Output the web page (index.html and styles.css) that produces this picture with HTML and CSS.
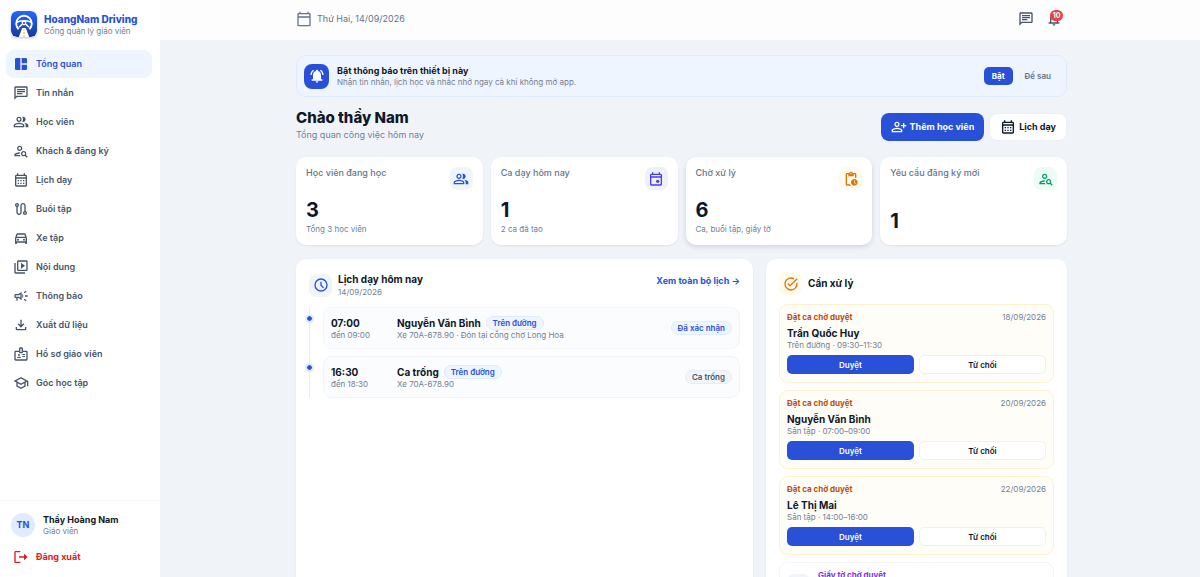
FILE: index.html
```html
<!DOCTYPE html>
<html lang="vi">
<head>
    <meta charset="UTF-8">
    <meta name="viewport" content="width=device-width, initial-scale=1.0">
    <title>HoangNam Driving</title>
    <link rel="stylesheet" href="styles.css">
</head>
<body>

    <!-- Icon set -->
    <svg class="hidden" aria-hidden="true">
        <symbol id="i-dashboard" viewBox="0 0 24 24"><path d="M11 21H5c-1.1 0-2-.9-2-2V5c0-1.1.9-2 2-2h6v18zm2 0h6c1.1 0 2-.9 2-2v-6h-8v8zm8-10V5c0-1.1-.9-2-2-2h-6v8h8z"/></symbol>
        <symbol id="i-chat" viewBox="0 0 24 24"><path d="M4 4h16v12H5.17L4 17.17V4m0-2c-1.1 0-2 .9-2 2v18l4-4h14c1.1 0 2-.9 2-2V4c0-1.1-.9-2-2-2H4zm2 10h8v2H6v-2zm0-3h12v2H6V9zm0-3h12v2H6V6z"/></symbol>
        <symbol id="i-group" viewBox="0 0 24 24"><path d="M16.67 13.13C18.04 14.06 19 15.32 19 17v3h4v-3c0-2.18-3.57-3.47-6.33-3.87zM15 12c2.21 0 4-1.79 4-4s-1.79-4-4-4c-.47 0-.91.1-1.33.24C14.5 5.27 15 6.58 15 8s-.5 2.73-1.33 3.76c.42.14.86.24 1.33.24zM9 12c2.21 0 4-1.79 4-4s-1.79-4-4-4-4 1.79-4 4 1.79 4 4 4zm0-6c1.1 0 2 .9 2 2s-.9 2-2 2-2-.9-2-2 .9-2 2-2zM9 13c-2.67 0-8 1.34-8 4v3h16v-3c0-2.66-5.33-4-8-4zm6 5H3v-.99C3.2 16.29 6.3 15 9 15s5.8 1.29 6 2v1z"/></symbol>
        <symbol id="i-person-search" viewBox="0 0 24 24"><path d="M10 12c2.21 0 4-1.79 4-4s-1.79-4-4-4-4 1.79-4 4 1.79 4 4 4zm0-6c1.1 0 2 .9 2 2s-.9 2-2 2-2-.9-2-2 .9-2 2-2zM4 18c.22-.72 3.31-2 6-2 0-.7.13-1.37.35-1.99C7.62 13.91 2 15.27 2 18v2h9.54c-.52-.58-.93-1.25-1.19-2H4zM19.43 18.02c.36-.59.57-1.28.57-2.02 0-2.21-1.79-4-4-4s-4 1.79-4 4 1.79 4 4 4c.74 0 1.43-.22 2.02-.57L20.59 22 22 20.59l-2.57-2.57zM16 18c-1.1 0-2-.9-2-2s.9-2 2-2 2 .9 2 2-.9 2-2 2z"/></symbol>
        <symbol id="i-calendar" viewBox="0 0 24 24"><path d="M19 4h-1V2h-2v2H8V2H6v2H5c-1.1 0-2 .9-2 2v14c0 1.1.9 2 2 2h14c1.1 0 2-.9 2-2V6c0-1.1-.9-2-2-2zm0 16H5V10h14v10zm0-12H5V6h14v2zM9 14H7v-2h2v2zm4 0h-2v-2h2v2zm4 0h-2v-2h2v2zm-8 4H7v-2h2v2zm4 0h-2v-2h2v2zm4 0h-2v-2h2v2z"/></symbol>
        <symbol id="i-route" viewBox="0 0 24 24"><path d="M19 15.18V7c0-2.21-1.79-4-4-4s-4 1.79-4 4v10c0 1.1-.9 2-2 2s-2-.9-2-2V8.82C8.16 8.4 9 7.3 9 6c0-1.66-1.34-3-3-3S3 4.34 3 6c0 1.3.84 2.4 2 2.82V17c0 2.21 1.79 4 4 4s4-1.79 4-4V7c0-1.1.9-2 2-2s2 .9 2 2v8.18c-1.16.41-2 1.51-2 2.82 0 1.66 1.34 3 3 3s3-1.34 3-3c0-1.3-.84-2.4-2-2.82zM6 7c-.55 0-1-.45-1-1s.45-1 1-1 1 .45 1 1-.45 1-1 1zm12 12c-.55 0-1-.45-1-1s.45-1 1-1 1 .45 1 1-.45 1-1 1z"/></symbol>
        <symbol id="i-car" viewBox="0 0 24 24"><path d="M18.92 6.01C18.72 5.42 18.16 5 17.5 5h-11c-.66 0-1.21.42-1.42 1.01L3 12v8c0 .55.45 1 1 1h1c.55 0 1-.45 1-1v-1h12v1c0 .55.45 1 1 1h1c.55 0 1-.45 1-1v-8l-2.08-5.99zM6.85 7h10.29l1.08 3.11H5.77L6.85 7zM19 17H5v-5h14v5z"/><circle cx="7.5" cy="14.5" r="1.5"/><circle cx="16.5" cy="14.5" r="1.5"/></symbol>
        <symbol id="i-video" viewBox="0 0 24 24"><path d="M4 6H2v14c0 1.1.9 2 2 2h14v-2H4V6zm16-4H8c-1.1 0-2 .9-2 2v12c0 1.1.9 2 2 2h12c1.1 0 2-.9 2-2V4c0-1.1-.9-2-2-2zm0 14H8V4h12v12zM12 5.5v9l6-4.5z"/></symbol>
        <symbol id="i-campaign" viewBox="0 0 24 24"><path d="M18 11v2h4v-2h-4zm-2 6.61c.96.71 2.21 1.65 3.2 2.39.4-.53.8-1.07 1.2-1.6-.99-.74-2.24-1.68-3.2-2.4-.4.54-.8 1.08-1.2 1.61zM20.4 5.6c-.4-.53-.8-1.07-1.2-1.6-.99.74-2.24 1.68-3.2 2.4.4.53.8 1.07 1.2 1.6.96-.72 2.21-1.65 3.2-2.4zM4 9c-1.1 0-2 .9-2 2v2c0 1.1.9 2 2 2h1v4h2v-4h1l5 3V6L8 9H4zm5.03 1.71L11 9.53v4.94l-1.97-1.18-.48-.29H4v-2h4.55l.48-.29zM15.5 12c0-1.33-.58-2.53-1.5-3.35v6.69c.92-.81 1.5-2.01 1.5-3.34z"/></symbol>
        <symbol id="i-download" viewBox="0 0 24 24"><path d="M12 16l-5-5 1.4-1.45 2.6 2.6V4h2v8.15l2.6-2.6L17 11l-5 5zm-6 4c-1.1 0-2-.9-2-2v-3h2v3h12v-3h2v3c0 1.1-.9 2-2 2H6z"/></symbol>
        <symbol id="i-badge" viewBox="0 0 24 24"><path d="M20 7h-5V4c0-1.1-.9-2-2-2h-2c-1.1 0-2 .9-2 2v3H4c-1.1 0-2 .9-2 2v11c0 1.1.9 2 2 2h16c1.1 0 2-.9 2-2V9c0-1.1-.9-2-2-2zm-9-3h2v5h-2V4zm9 16H4V9h5c0 1.1.9 2 2 2h2c1.1 0 2-.9 2-2h5v11zM14 12h4v1.5h-4zM14 15h4v1.5h-4zM6 18v-.4c0-.9 1.5-1.6 3-1.6s3 .7 3 1.6v.4z"/><circle cx="9" cy="13.5" r="1.5"/></symbol>
        <symbol id="i-school" viewBox="0 0 24 24"><path d="M12 3 1 9l4 2.18v6L12 21l7-3.82v-6l2-1.09V17h2V9L12 3zm6.82 6L12 12.72 5.18 9 12 5.28 18.82 9zM17 15.99l-5 2.73-5-2.73v-3.72L12 15l5-2.73v3.72z"/></symbol>
        <symbol id="i-logout" viewBox="0 0 24 24"><path d="M11 3H4c-1.1 0-2 .9-2 2v14c0 1.1.9 2 2 2h7v-2H4V5h7V3zM16.5 7v4H9v2h7.5v4l5.5-5-5.5-5z"/></symbol>
        <symbol id="i-today" viewBox="0 0 24 24"><path d="M20 3h-1V1h-2v2H7V1H5v2H4c-1.1 0-2 .9-2 2v16c0 1.1.9 2 2 2h16c1.1 0 2-.9 2-2V5c0-1.1-.9-2-2-2zm0 18H4V10h16v11zm0-13H4V5h16v3z"/></symbol>
        <symbol id="i-bell" viewBox="0 0 24 24"><path d="M12 22c1.1 0 2-.9 2-2h-4c0 1.1.9 2 2 2zm6-5v-6c0-3.07-1.63-5.64-4.5-6.32V4c0-.83-.67-1.5-1.5-1.5s-1.5.67-1.5 1.5v.68C7.64 5.36 6 7.92 6 11v6H4v2h16v-2h-2zm-2 0H8v-6c0-2.48 1.51-4.5 4-4.5s4 2.02 4 4.5v6z"/></symbol>
        <symbol id="i-bell-active" viewBox="0 0 24 24"><path d="M12 22c1.1 0 2-.9 2-2h-4c0 1.1.9 2 2 2zm6-5v-6c0-3.07-1.63-5.64-4.5-6.32V4c0-.83-.67-1.5-1.5-1.5s-1.5.67-1.5 1.5v.68C7.64 5.36 6 7.92 6 11v6H4v2h16v-2h-2zM7.58 4.08 6.15 2.65C3.75 4.48 2.17 7.3 2.03 10.5h2c.15-2.65 1.51-4.97 3.55-6.42zM19.97 10.5h2c-.15-3.2-1.73-6.02-4.12-7.85l-1.42 1.43c2.02 1.45 3.39 3.77 3.54 6.42z"/></symbol>
        <symbol id="i-person-add" viewBox="0 0 24 24"><path d="M9 12c2.21 0 4-1.79 4-4s-1.79-4-4-4-4 1.79-4 4 1.79 4 4 4zm0-6c1.1 0 2 .9 2 2s-.9 2-2 2-2-.9-2-2 .9-2 2-2zM9 13c-2.67 0-8 1.34-8 4v3h16v-3c0-2.66-5.33-4-8-4zm6 5H3v-.99C3.2 16.29 6.3 15 9 15s5.8 1.29 6 2v1zM18 14v-3h-3V9h3V6h2v3h3v2h-3v3z"/></symbol>
        <symbol id="i-event" viewBox="0 0 24 24"><path d="M19 4h-1V2h-2v2H8V2H6v2H5c-1.1 0-2 .9-2 2v14c0 1.1.9 2 2 2h14c1.1 0 2-.9 2-2V6c0-1.1-.9-2-2-2zm0 16H5V10h14v10zm0-12H5V6h14v2z"/><circle cx="14.5" cy="15.5" r="2.5"/></symbol>
        <symbol id="i-pending" viewBox="0 0 24 24"><path d="M17 12c-2.76 0-5 2.24-5 5s2.24 5 5 5 5-2.24 5-5-2.24-5-5-5zm1.65 7.35L16.5 17.2V14h1v2.79l1.85 1.85-.7.71zM18 3h-3.18C14.4 1.84 13.3 1 12 1s-2.4.84-2.82 2H6c-1.1 0-2 .9-2 2v15c0 1.1.9 2 2 2h6.11c-.59-.57-1.07-1.25-1.42-2H6V5h2v3h8V5h2v5.08c.71.1 1.38.31 2 .6V5c0-1.1-.9-2-2-2zm-6 2c-.55 0-1-.45-1-1s.45-1 1-1 1 .45 1 1-.45 1-1 1z"/></symbol>
        <symbol id="i-clock" viewBox="0 0 24 24"><path fill="none" stroke="currentColor" stroke-width="2" d="M12 3a9 9 0 1 0 0 18 9 9 0 0 0 0-18zM12 7v5.5l3.8 3.8"/></symbol>
        <symbol id="i-task" viewBox="0 0 24 24"><path fill="none" stroke="currentColor" stroke-width="2" d="M20.8 10.2A9 9 0 1 1 16.5 4.2M7.1 11.3l3.5 3.5L21.3 4.1"/></symbol>
        <symbol id="i-file" viewBox="0 0 24 24"><path d="M14 2H6c-1.1 0-2 .9-2 2v16c0 1.1.9 2 2 2h12c1.1 0 2-.9 2-2V8l-6-6zM6 20V4h7v5h5v11H6z"/></symbol>
    </svg>

    <!-- Sidebar -->
    <aside class="sidebar">
        <div class="brand">
            <svg class="brand-logo" viewBox="0 0 26 26" aria-hidden="true">
                <defs>
                    <linearGradient id="logo-bg" x1="0" y1="0" x2="0" y2="1">
                        <stop offset="0" stop-color="#2468fb"/>
                        <stop offset="1" stop-color="#173a96"/>
                    </linearGradient>
                </defs>
                <rect width="26" height="26" rx="6" fill="url(#logo-bg)"/>
                <path d="M7.6 18.2a7.8 7.8 0 1 1 10.8 0" fill="none" stroke="#fff" stroke-width="1.9"/>
                <path d="M5.8 11.2c4-1.6 10.4-1.6 14.4 0M8 16.2l3-2.8M18 16.2l-3-2.8" fill="none" stroke="#fff" stroke-width="1.5"/>
                <circle cx="13" cy="12" r="2.4" fill="#fff"/>
                <circle cx="13" cy="12" r="1.1" fill="#2257d8"/>
                <path d="M11.2 17h3.6l3.4 9H7.8z" fill="#fff"/>
                <path d="M13 18v1.6M13 21v1.8M13 24.2V26" stroke="#f59e0b" stroke-width="0.9"/>
            </svg>
            <div>
                <div class="brand-name">HoangNam Driving</div>
                <div class="brand-sub">Cổng quản lý giáo viên</div>
            </div>
        </div>

        <nav class="nav">
            <a class="nav-item active" href="#"><svg class="icon"><use href="#i-dashboard"/></svg>Tổng quan</a>
            <a class="nav-item" href="#"><svg class="icon"><use href="#i-chat"/></svg>Tin nhắn</a>
            <a class="nav-item" href="#"><svg class="icon"><use href="#i-group"/></svg>Học viên</a>
            <a class="nav-item" href="#"><svg class="icon"><use href="#i-person-search"/></svg>Khách &amp; đăng ký</a>
            <a class="nav-item" href="#"><svg class="icon"><use href="#i-calendar"/></svg>Lịch dạy</a>
            <a class="nav-item" href="#"><svg class="icon"><use href="#i-route"/></svg>Buổi tập</a>
            <a class="nav-item" href="#"><svg class="icon"><use href="#i-car"/></svg>Xe tập</a>
            <a class="nav-item" href="#"><svg class="icon"><use href="#i-video"/></svg>Nội dung</a>
            <a class="nav-item" href="#"><svg class="icon"><use href="#i-campaign"/></svg>Thông báo</a>
            <a class="nav-item" href="#"><svg class="icon"><use href="#i-download"/></svg>Xuất dữ liệu</a>
            <a class="nav-item" href="#"><svg class="icon"><use href="#i-badge"/></svg>Hồ sơ giáo viên</a>
            <a class="nav-item" href="#"><svg class="icon"><use href="#i-school"/></svg>Góc học tập</a>
        </nav>

        <div class="sidebar-footer">
            <div class="user">
                <div class="avatar">TN</div>
                <div>
                    <div class="user-name">Thầy Hoàng Nam</div>
                    <div class="user-role">Giáo viên</div>
                </div>
            </div>
            <button class="logout-btn"><svg class="icon"><use href="#i-logout"/></svg>Đăng xuất</button>
        </div>
    </aside>

    <div class="main">
        <!-- Top bar -->
        <header class="topbar">
            <div class="container topbar-inner">
                <div class="today"><svg class="icon"><use href="#i-today"/></svg>Thứ Hai, 14/09/2026</div>
                <div class="topbar-actions">
                    <button class="icon-btn" aria-label="Tin nhắn"><svg class="icon"><use href="#i-chat"/></svg></button>
                    <button class="icon-btn" aria-label="Thông báo"><svg class="icon"><use href="#i-bell"/></svg><span class="badge">10</span></button>
                </div>
            </div>
        </header>

        <main class="container content">
            <section class="banner">
                <div class="banner-icon"><svg class="icon"><use href="#i-bell-active"/></svg></div>
                <div class="banner-text">
                    <div class="banner-title">Bật thông báo trên thiết bị này</div>
                    <div class="small">Nhận tin nhắn, lịch học và nhắc nhở ngay cả khi không mở app.</div>
                </div>
                <button class="enable-btn">Bật</button>
                <button class="later-btn">Để sau</button>
            </section>

            <section class="page-head">
                <div>
                    <h1>Chào thầy Nam</h1>
                    <p class="page-sub">Tổng quan công việc hôm nay</p>
                </div>
                <div class="page-actions">
                    <button class="btn btn-primary"><svg class="icon"><use href="#i-person-add"/></svg>Thêm học viên</button>
                    <button class="btn"><svg class="icon"><use href="#i-calendar"/></svg>Lịch dạy</button>
                </div>
            </section>

            <!-- Stats -->
            <section class="stats">
                <a class="stat" href="#">
                    <div class="stat-top">Học viên đang học<span class="tile tile-blue"><svg class="icon"><use href="#i-group"/></svg></span></div>
                    <div><div class="stat-value">3</div><div class="small">Tổng 3 học viên</div></div>
                </a>
                <a class="stat" href="#">
                    <div class="stat-top">Ca dạy hôm nay<span class="tile tile-indigo"><svg class="icon"><use href="#i-event"/></svg></span></div>
                    <div><div class="stat-value">1</div><div class="small">2 ca đã tạo</div></div>
                </a>
                <a class="stat raised" href="#">
                    <div class="stat-top">Chờ xử lý<span class="tile tile-amber"><svg class="icon"><use href="#i-pending"/></svg></span></div>
                    <div><div class="stat-value">6</div><div class="small">Ca, buổi tập, giấy tờ</div></div>
                </a>
                <a class="stat" href="#">
                    <div class="stat-top">Yêu cầu đăng ký mới<span class="tile tile-green"><svg class="icon"><use href="#i-person-search"/></svg></span></div>
                    <div class="stat-value">1</div>
                </a>
            </section>

            <section class="panels">
                <!-- Schedule -->
                <div class="panel">
                    <div class="panel-head">
                        <span class="tile tile-blue"><svg class="icon"><use href="#i-clock"/></svg></span>
                        <div>
                            <h2>Lịch dạy hôm nay</h2>
                            <div class="small">14/09/2026</div>
                        </div>
                        <a class="all-link" href="#">Xem toàn bộ lịch →</a>
                    </div>
                    <div class="timeline">
                        <div class="slot">
                            <div class="slot-time"><div class="name">07:00</div><div class="small">đến 09:00</div></div>
                            <div class="slot-info">
                                <div class="slot-name"><span class="name">Nguyễn Văn Bình</span><span class="pill">Trên đường</span></div>
                                <div class="small">Xe 70A-678.90 · Đón tại cổng chợ Long Hoa</div>
                            </div>
                            <span class="pill">Đã xác nhận</span>
                        </div>
                        <div class="slot">
                            <div class="slot-time"><div class="name">16:30</div><div class="small">đến 18:30</div></div>
                            <div class="slot-info">
                                <div class="slot-name"><span class="name">Ca trống</span><span class="pill">Trên đường</span></div>
                                <div class="small">Xe 70A-678.90</div>
                            </div>
                            <span class="pill pill-gray">Ca trống</span>
                        </div>
                    </div>
                </div>

                <!-- Pending requests -->
                <div class="panel">
                    <div class="panel-head">
                        <span class="tile tile-amber"><svg class="icon"><use href="#i-task"/></svg></span>
                        <h2>Cần xử lý</h2>
                    </div>
                    <div class="requests">
                        <article class="request">
                            <div class="request-top"><span class="request-type">Đặt ca chờ duyệt</span><span class="small">18/09/2026</span></div>
                            <div class="name">Trần Quốc Huy</div>
                            <div class="small">Trên đường · 09:30–11:30</div>
                            <div class="request-actions"><button class="approve-btn">Duyệt</button><button class="reject-btn">Từ chối</button></div>
                        </article>
                        <article class="request">
                            <div class="request-top"><span class="request-type">Đặt ca chờ duyệt</span><span class="small">20/09/2026</span></div>
                            <div class="name">Nguyễn Văn Bình</div>
                            <div class="small">Sân tập · 07:00–09:00</div>
                            <div class="request-actions"><button class="approve-btn">Duyệt</button><button class="reject-btn">Từ chối</button></div>
                        </article>
                        <article class="request">
                            <div class="request-top"><span class="request-type">Đặt ca chờ duyệt</span><span class="small">22/09/2026</span></div>
                            <div class="name">Lê Thị Mai</div>
                            <div class="small">Sân tập · 14:00–16:00</div>
                            <div class="request-actions"><button class="approve-btn">Duyệt</button><button class="reject-btn">Từ chối</button></div>
                        </article>
                        <article class="request request-doc">
                            <span class="tile tile-blue doc-tile"><svg class="icon"><use href="#i-file"/></svg></span>
                            <div class="request-type">Giấy tờ chờ duyệt</div>
                        </article>
                    </div>
                </div>
            </section>
        </main>
    </div>

</body>
</html>
```
FILE: styles.css
```css
* {
    box-sizing: border-box;
}
body {
    margin: 0;
    display: flex;
    height: 100vh;
    overflow: hidden;
    font-family: Inter, "Noto Sans", sans-serif;
    font-size: 9px;
    line-height: 12px;
    color: #0f172a;
    background-color: #f0f4f9;
}
h1, h2, p {
    margin: 0;
}
a {
    color: inherit;
    text-decoration: none;
}
button {
    font: inherit;
    color: inherit;
    border: none;
    background: none;
    padding: 0;
    cursor: pointer;
}
.hidden {
    display: none;
}
.icon {
    width: 16px;
    height: 16px;
    flex-shrink: 0;
    fill: currentColor;
}
.small {
    font-size: 8px;
    line-height: 11px;
    color: #718096;
    font-weight: 400;
}
.name {
    font-size: 10px;
    line-height: 14px;
    font-weight: 700;
}

/* Sidebar */
.sidebar {
    width: 160px;
    flex-shrink: 0;
    display: flex;
    flex-direction: column;
    background-color: #fff;
}
.brand {
    display: flex;
    align-items: center;
    gap: 7px;
    padding: 11px 11px 13px;
}
.brand-logo {
    width: 26px;
    height: 26px;
    border-radius: 6px;
    box-shadow: 0 1px 3px rgba(30, 64, 175, 0.3);
}
.brand-name {
    padding-top: 1px;
    font-size: 10px;
    line-height: 14px;
    font-weight: 800;
    color: #2851d8;
    white-space: nowrap;
}
.brand-sub, .user-role {
    font-size: 8px;
    line-height: 11px;
    color: #718096;
}
.nav {
    flex: 1;
    display: flex;
    flex-direction: column;
    gap: 1px;
    padding: 0 8px 0 6px;
}
.nav-item {
    display: flex;
    align-items: center;
    gap: 7px;
    height: 28px;
    padding: 0 7px;
    border-radius: 8px;
    font-weight: 600;
    color: #475569;
}
.nav-item.active {
    background-color: #eff5ff;
    color: #2851d8;
}
.sidebar-footer {
    border-top: 1px solid #f1f5f9;
    padding: 12px 11px;
}
.user {
    display: flex;
    align-items: center;
    gap: 8px;
}
.avatar {
    width: 24px;
    height: 24px;
    border-radius: 50%;
    background-color: #dfebfe;
    color: #2851d8;
    font-weight: 700;
    line-height: 24px;
    text-align: center;
}
.user-name {
    font-weight: 700;
}
.logout-btn {
    display: flex;
    align-items: center;
    gap: 7px;
    margin-top: 12px;
    padding-left: 2px;
    font-weight: 700;
    color: #dc1c24;
}

/* Top bar */
.main {
    flex: 1;
    min-width: 0;
}
.container {
    max-width: 774px;
    margin: 0 auto;
    padding-left: 3px;
}
.topbar {
    background-color: #fdfdfe;
}
.topbar-inner {
    display: flex;
    align-items: center;
    justify-content: space-between;
    height: 40px;
    padding-bottom: 2px;
}
.today {
    display: flex;
    align-items: center;
    gap: 5px;
    color: #64748b;
}
.topbar-actions {
    display: flex;
    gap: 12px;
    padding-right: 5px;
    color: #475569;
}
.icon-btn {
    position: relative;
    display: flex;
}
.badge {
    position: absolute;
    top: -1px;
    right: -1px;
    min-width: 13px;
    padding: 0 2px;
    border-radius: 6px;
    background-color: #ec4141;
    color: #fff;
    font-size: 7px;
    line-height: 11px;
    font-weight: 700;
}

/* Notification banner */
.content {
    padding-top: 15px;
}
.banner {
    display: flex;
    align-items: center;
    height: 42px;
    padding: 0 7px;
    border: 1px solid #dfebfe;
    border-radius: 10px;
    background-color: #eff5ff;
}
.banner-icon {
    display: grid;
    place-items: center;
    width: 25px;
    height: 25px;
    margin-right: 8px;
    border-radius: 8px;
    background-color: #2851d8;
    color: #fff;
}
.banner-text {
    flex: 1;
}
.banner-title {
    font-weight: 700;
}
.enable-btn, .later-btn {
    height: 18px;
    padding: 0 8px;
    border-radius: 5px;
    font-size: 8px;
    font-weight: 700;
}
.enable-btn {
    background-color: #2851d8;
    color: #fff;
    margin-right: 4px;
}
.later-btn {
    color: #64748b;
    font-weight: 600;
}

/* Page heading */
.page-head {
    display: flex;
    align-items: center;
    justify-content: space-between;
    padding: 11px 0 16px;
}
h1 {
    font-size: 15px;
    line-height: 20px;
    font-weight: 800;
}
.page-sub {
    line-height: 13px;
    color: #718096;
}
.page-actions {
    display: flex;
    gap: 5px;
    padding-top: 5px;
}
.btn {
    display: flex;
    align-items: center;
    gap: 3px;
    height: 28px;
    padding: 0 10px;
    border: 1px solid #edf1f7;
    border-radius: 8px;
    background-color: #fff;
    font-weight: 700;
}
.btn-primary {
    border: none;
    background-color: #2851d8;
    color: #fff;
}

/* Stat cards */
.stats {
    display: grid;
    grid-template-columns: repeat(4, 1fr);
    gap: 8px;
}
.stat {
    display: flex;
    flex-direction: column;
    justify-content: space-between;
    height: 88px;
    padding: 10px;
    border-radius: 10px;
    background-color: #fff;
    box-shadow: 0 1px 2px rgba(15, 23, 42, 0.08);
}
.stat.raised {
    box-shadow: 0 2px 5px rgba(15, 23, 42, 0.14);
}
.stat-top {
    display: flex;
    justify-content: space-between;
    font-weight: 500;
    color: #64748b;
}
.stat-value {
    font-size: 20px;
    line-height: 28px;
    font-weight: 700;
}
.tile {
    display: grid;
    place-items: center;
    width: 23px;
    height: 23px;
    flex-shrink: 0;
    border-radius: 7px;
}
.tile-blue {
    background-color: #eff5ff;
    color: #2851d8;
}
.tile-indigo {
    background-color: #edf1ff;
    color: #4f39f0;
}
.tile-amber {
    background-color: #fffaeb;
    color: #dc7609;
}
.tile-green {
    background-color: #ebfdf5;
    color: #0a9a69;
}

/* Panels */
.panels {
    display: grid;
    grid-template-columns: 457fr 301fr;
    gap: 13px;
    margin-top: 14px;
}
.panel {
    padding: 13px;
    border-radius: 10px;
    background-color: #fff;
    box-shadow: 0 1px 2px rgba(15, 23, 42, 0.08);
}
.panel-head {
    display: flex;
    align-items: center;
    gap: 6px;
    margin-bottom: 9px;
}
h2 {
    font-size: 10px;
    line-height: 15px;
    font-weight: 700;
}
.all-link {
    margin-left: auto;
    padding-bottom: 9px;
    font-weight: 700;
    color: #2851d8;
}
.timeline {
    display: grid;
    gap: 7px;
    padding-left: 13px;
    border-left: 1px solid #e6edf6;
}
.slot {
    position: relative;
    display: flex;
    align-items: center;
    height: 42px;
    padding: 0 7px;
    border: 1px solid #f1f5f9;
    border-radius: 9px;
    background-color: #fbfcfe;
}
.slot::before {
    content: "";
    position: absolute;
    left: -19px;
    top: 6px;
    width: 5px;
    height: 5px;
    border: 2px solid #dfebfe;
    border-radius: 50%;
    background-color: #2851d8;
    background-clip: padding-box;
}
.slot-time {
    width: 66px;
}
.slot-info {
    flex: 1;
}
.slot-name {
    display: flex;
    align-items: center;
    gap: 5px;
}
.pill {
    padding: 0 6px;
    border: 1px solid #dfebfe;
    border-radius: 7px;
    background-color: #eff5ff;
    color: #2851d8;
    font-size: 8px;
    line-height: 12px;
    font-weight: 600;
}
.pill-gray {
    border-color: #e6edf6;
    background-color: #f1f5f9;
    color: #475569;
}

/* Requests */
.requests {
    display: grid;
    gap: 7px;
}
.request {
    height: 79px;
    padding: 7px;
    border: 1px solid #fef3cc;
    border-radius: 9px;
    background-color: #fffdf8;
}
.request-top {
    display: flex;
    justify-content: space-between;
}
.request-type {
    font-size: 8px;
    line-height: 11px;
    font-weight: 700;
    color: #bc4d0c;
}
.request .name {
    margin-top: 3px;
}
.request-actions {
    display: grid;
    grid-template-columns: 1fr 1fr;
    gap: 5px;
    margin-top: 4px;
}
.approve-btn, .reject-btn {
    height: 19px;
    border-radius: 5px;
    font-size: 8px;
    font-weight: 600;
}
.approve-btn {
    background-color: #2851d8;
    color: #fff;
}
.reject-btn {
    border: 1px solid #edf1f7;
    background-color: #fff;
}
.request-doc {
    display: flex;
    gap: 8px;
    border-color: #f1f5f9;
    background-color: #fff;
}
.request-doc .request-type {
    color: #7c2fe8;
}
.doc-tile {
    margin-top: 4px;
}
```
